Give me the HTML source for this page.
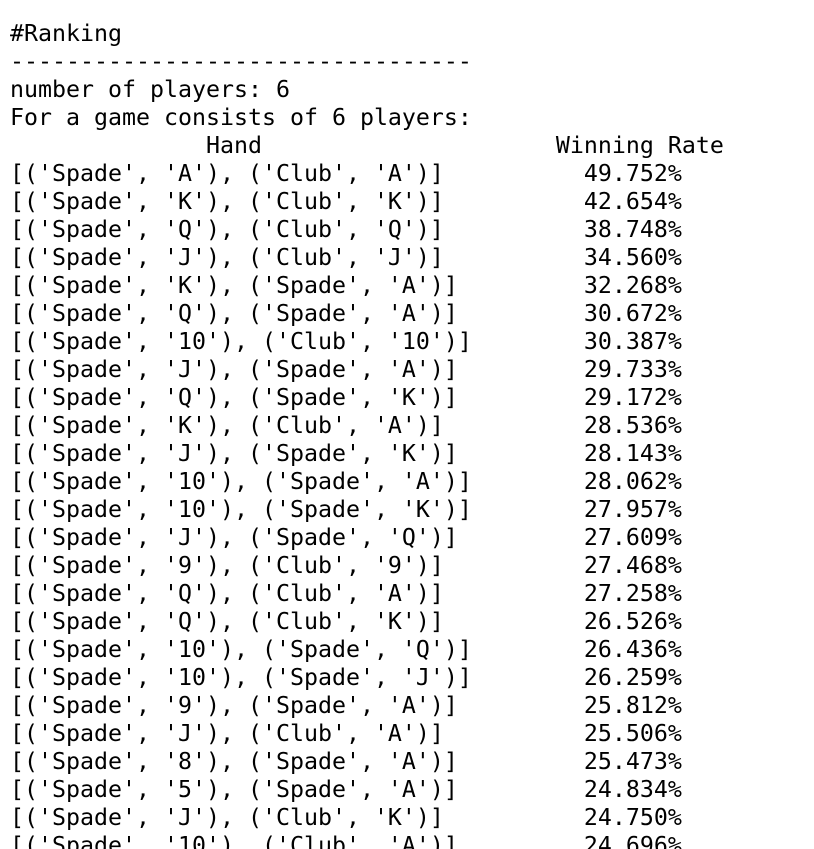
<!DOCTYPE html>
<html><head><meta charset="utf-8"><style>
html,body{margin:0;padding:0;background:#fff;width:814px;height:849px;overflow:hidden}
pre{margin:0;padding:20px 0 0 10px;font-family:"DejaVu Sans Mono","Liberation Mono",monospace;font-size:23.25px;line-height:28px;color:#000;letter-spacing:0}
</style></head><body><pre>#Ranking
---------------------------------
number of players: 6
For a game consists of 6 players:
              Hand                     Winning Rate
[('Spade', 'A'), ('Club', 'A')]          49.752%
[('Spade', 'K'), ('Club', 'K')]          42.654%
[('Spade', 'Q'), ('Club', 'Q')]          38.748%
[('Spade', 'J'), ('Club', 'J')]          34.560%
[('Spade', 'K'), ('Spade', 'A')]         32.268%
[('Spade', 'Q'), ('Spade', 'A')]         30.672%
[('Spade', '10'), ('Club', '10')]        30.387%
[('Spade', 'J'), ('Spade', 'A')]         29.733%
[('Spade', 'Q'), ('Spade', 'K')]         29.172%
[('Spade', 'K'), ('Club', 'A')]          28.536%
[('Spade', 'J'), ('Spade', 'K')]         28.143%
[('Spade', '10'), ('Spade', 'A')]        28.062%
[('Spade', '10'), ('Spade', 'K')]        27.957%
[('Spade', 'J'), ('Spade', 'Q')]         27.609%
[('Spade', '9'), ('Club', '9')]          27.468%
[('Spade', 'Q'), ('Club', 'A')]          27.258%
[('Spade', 'Q'), ('Club', 'K')]          26.526%
[('Spade', '10'), ('Spade', 'Q')]        26.436%
[('Spade', '10'), ('Spade', 'J')]        26.259%
[('Spade', '9'), ('Spade', 'A')]         25.812%
[('Spade', 'J'), ('Club', 'A')]          25.506%
[('Spade', '8'), ('Spade', 'A')]         25.473%
[('Spade', '5'), ('Spade', 'A')]         24.834%
[('Spade', 'J'), ('Club', 'K')]          24.750%
[('Spade', '10'), ('Club', 'A')]         24.696%
</pre></body></html>
